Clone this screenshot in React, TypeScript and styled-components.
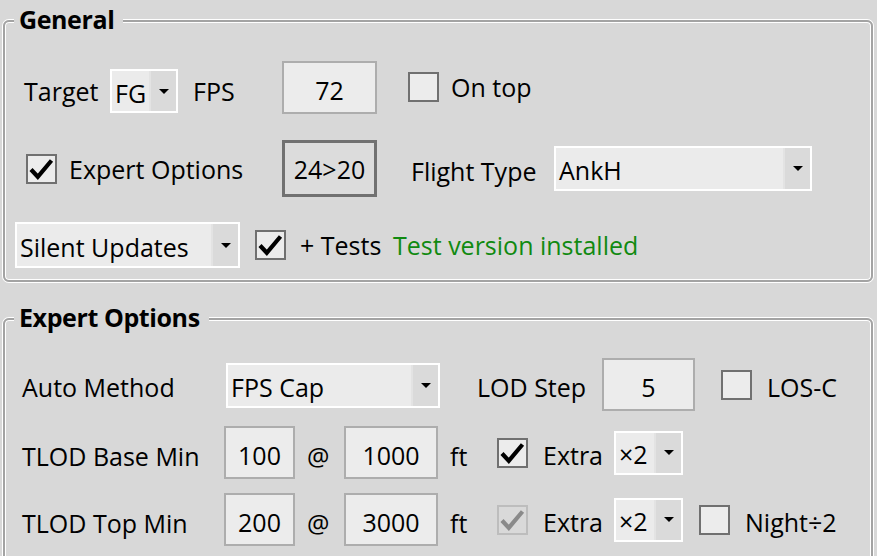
import React from 'react';
import styled, { createGlobalStyle } from 'styled-components';

const GlobalStyle = createGlobalStyle`
  html, body {
    margin: 0;
    padding: 0;
    background: #d8d8d8;
  }
  body {
    font-family: "Open Sans", "Noto Sans", sans-serif;
    font-size: 25px;
    color: #000;
    overflow: hidden;
  }
`;

const Page = styled.div`
  width: 877px;
  height: 556px;
  padding-left: 3px;
  box-sizing: border-box;
  overflow: hidden;
`;

const Group = styled.fieldset<{ $mt: number; $pb: number }>`
  margin: ${(p) => p.$mt}px 0 0;
  width: 870px;
  min-width: 0;
  box-sizing: border-box;
  padding: 0 0 ${(p) => p.$pb}px;
  border: 2px solid #a3a3a3;
  border-radius: 6px;
  box-shadow: 0 0 0 1px #fff, inset 0 0 0 1px #fff;
`;

const Legend = styled.legend`
  margin-left: 9px;
  padding: 0 9px 4px 5px;
  line-height: 28px;
  font-weight: 700;
  letter-spacing: -0.4px;
  background: #d8d8d8;
`;

const Row = styled.div<{ $h: number; $mt: number }>`
  display: flex;
  align-items: center;
  height: ${(p) => p.$h}px;
  margin-top: ${(p) => p.$mt}px;
  white-space: nowrap;
`;

const Label = styled.span<{ $w?: number; $ml?: number; $dy?: number; $green?: boolean }>`
  flex: none;
  width: ${(p) => (p.$w ? `${p.$w}px` : 'auto')};
  margin-left: ${(p) => p.$ml ?? 0}px;
  margin-top: ${(p) => (p.$dy ?? 0) * 2}px;
  line-height: 32px;
  color: ${(p) => (p.$green ? '#118a11' : '#000')};
`;

const TextBox = styled.div<{ $w: number; $h?: number }>`
  flex: none;
  display: flex;
  align-items: center;
  justify-content: center;
  box-sizing: border-box;
  width: ${(p) => p.$w}px;
  height: ${(p) => p.$h ?? 53}px;
  padding-top: 5px;
  border: 2px solid #adadad;
  background: #ececec;
`;

const PushButton = styled.div<{ $w: number; $h: number }>`
  flex: none;
  display: flex;
  align-items: center;
  justify-content: center;
  box-sizing: border-box;
  width: ${(p) => p.$w}px;
  height: ${(p) => p.$h}px;
  border: 3px solid #717171;
  background: #dcdcdc;
`;

const ComboBox = styled.div<{ $w: number; $h: number; $ml?: number; $dy?: number }>`
  flex: none;
  display: flex;
  box-sizing: border-box;
  width: ${(p) => p.$w}px;
  height: ${(p) => p.$h}px;
  margin-left: ${(p) => p.$ml ?? 0}px;
  margin-top: ${(p) => (p.$dy ?? 0) * 2}px;
  border: 2px solid #fff;
  background: #ebebeb;
`;

const ComboText = styled.div`
  flex: 1;
  display: flex;
  align-items: center;
  padding: 3px 0 0 3px;
  overflow: hidden;
`;

const ComboButton = styled.div`
  flex: none;
  width: 25px;
  display: flex;
  align-items: center;
  justify-content: center;
  border-left: 2px solid #e3e3e3;
  background: #dadada;

  &::after {
    content: '';
    border-left: 5px solid transparent;
    border-right: 5px solid transparent;
    border-top: 5px solid #000;
  }
`;

const CheckBox = styled.div<{ $ml?: number; $disabled?: boolean }>`
  flex: none;
  display: flex;
  box-sizing: border-box;
  width: 31px;
  height: 30px;
  margin-left: ${(p) => p.$ml ?? 0}px;
  border: 2px solid ${(p) => (p.$disabled ? '#bdbdbd' : '#707070')};
  background: ${(p) => (p.$disabled ? '#d9d9d9' : '#ececec')};
`;

type ComboProps = { value: string; w: number; h: number; ml?: number; dy?: number };

const Combo = ({ value, w, h, ml, dy }: ComboProps) => (
  <ComboBox $w={w} $h={h} $ml={ml} $dy={dy}>
    <ComboText>{value}</ComboText>
    <ComboButton />
  </ComboBox>
);

type CheckProps = { checked?: boolean; disabled?: boolean; ml?: number };

const Check = ({ checked, disabled, ml }: CheckProps) => (
  <CheckBox $ml={ml} $disabled={disabled}>
    {checked && (
      <svg width="27" height="26" viewBox="0 0 27 26">
        <path
          d="M3 13.5 L9.8 20.8 L23.5 4.5"
          fill="none"
          stroke={disabled ? '#8a8a8a' : '#000'}
          strokeWidth="4.2"
        />
      </svg>
    )}
  </CheckBox>
);

export default function App() {
  return (
    <Page>
      <GlobalStyle />

      <Group $mt={5} $pb={12}>
        <Legend>General</Legend>
        <Row $h={54} $mt={23}>
          <Label $ml={19} $w={86} $dy={4}>Target</Label>
          <Combo value="FG" w={68} h={44} dy={4} />
          <Label $ml={15} $w={89} $dy={4}>FPS</Label>
          <TextBox $w={95}>72</TextBox>
          <Check ml={31} />
          <Label $ml={12}>On top</Label>
        </Row>
        <Row $h={57} $mt={26}>
          <Check checked ml={21} />
          <Label $ml={12} $w={213}>Expert Options</Label>
          <PushButton $w={95} $h={57}>24&gt;20</PushButton>
          <Label $ml={34} $w={143} $dy={2}>Flight Type</Label>
          <Combo value="AnkH" w={258} h={45} />
        </Row>
        <Row $h={46} $mt={25}>
          <Combo value="Silent Updates" w={225} h={46} ml={10} />
          <Check checked ml={15} />
          <Label $ml={14} $w={93}>+ Tests</Label>
          <Label $green>Test version installed</Label>
        </Row>
      </Group>

      <Group $mt={21} $pb={20}>
        <Legend>Expert Options</Legend>
        <Row $h={53} $mt={23}>
          <Label $ml={17} $w={204} $dy={2}>Auto Method</Label>
          <Combo value="FPS Cap" w={214} h={45} dy={1} />
          <Label $ml={37} $w={125} $dy={2}>LOD Step</Label>
          <TextBox $w={93}>5</TextBox>
          <Check ml={26} />
          <Label $ml={15} $dy={2}>LOS-C</Label>
        </Row>
        <Row $h={53} $mt={15}>
          <Label $ml={17} $w={202} $dy={3}>TLOD Base Min</Label>
          <TextBox $w={71}>100</TextBox>
          <Label $ml={12} $w={37} $dy={3}>@</Label>
          <TextBox $w={94}>1000</TextBox>
          <Label $ml={12} $w={47} $dy={3}>ft</Label>
          <Check checked />
          <Label $ml={15} $w={71} $dy={2}>Extra</Label>
          <Combo value="×2" w={69} h={44} />
        </Row>
        <Row $h={53} $mt={14}>
          <Label $ml={17} $w={202} $dy={3}>TLOD Top Min</Label>
          <TextBox $w={71}>200</TextBox>
          <Label $ml={12} $w={37} $dy={3}>@</Label>
          <TextBox $w={94}>3000</TextBox>
          <Label $ml={12} $w={47} $dy={3}>ft</Label>
          <Check checked disabled />
          <Label $ml={15} $w={71} $dy={2}>Extra</Label>
          <Combo value="×2" w={69} h={44} />
          <Check ml={16} />
          <Label $ml={15} $dy={2}>Night÷2</Label>
        </Row>
      </Group>
    </Page>
  );
}
